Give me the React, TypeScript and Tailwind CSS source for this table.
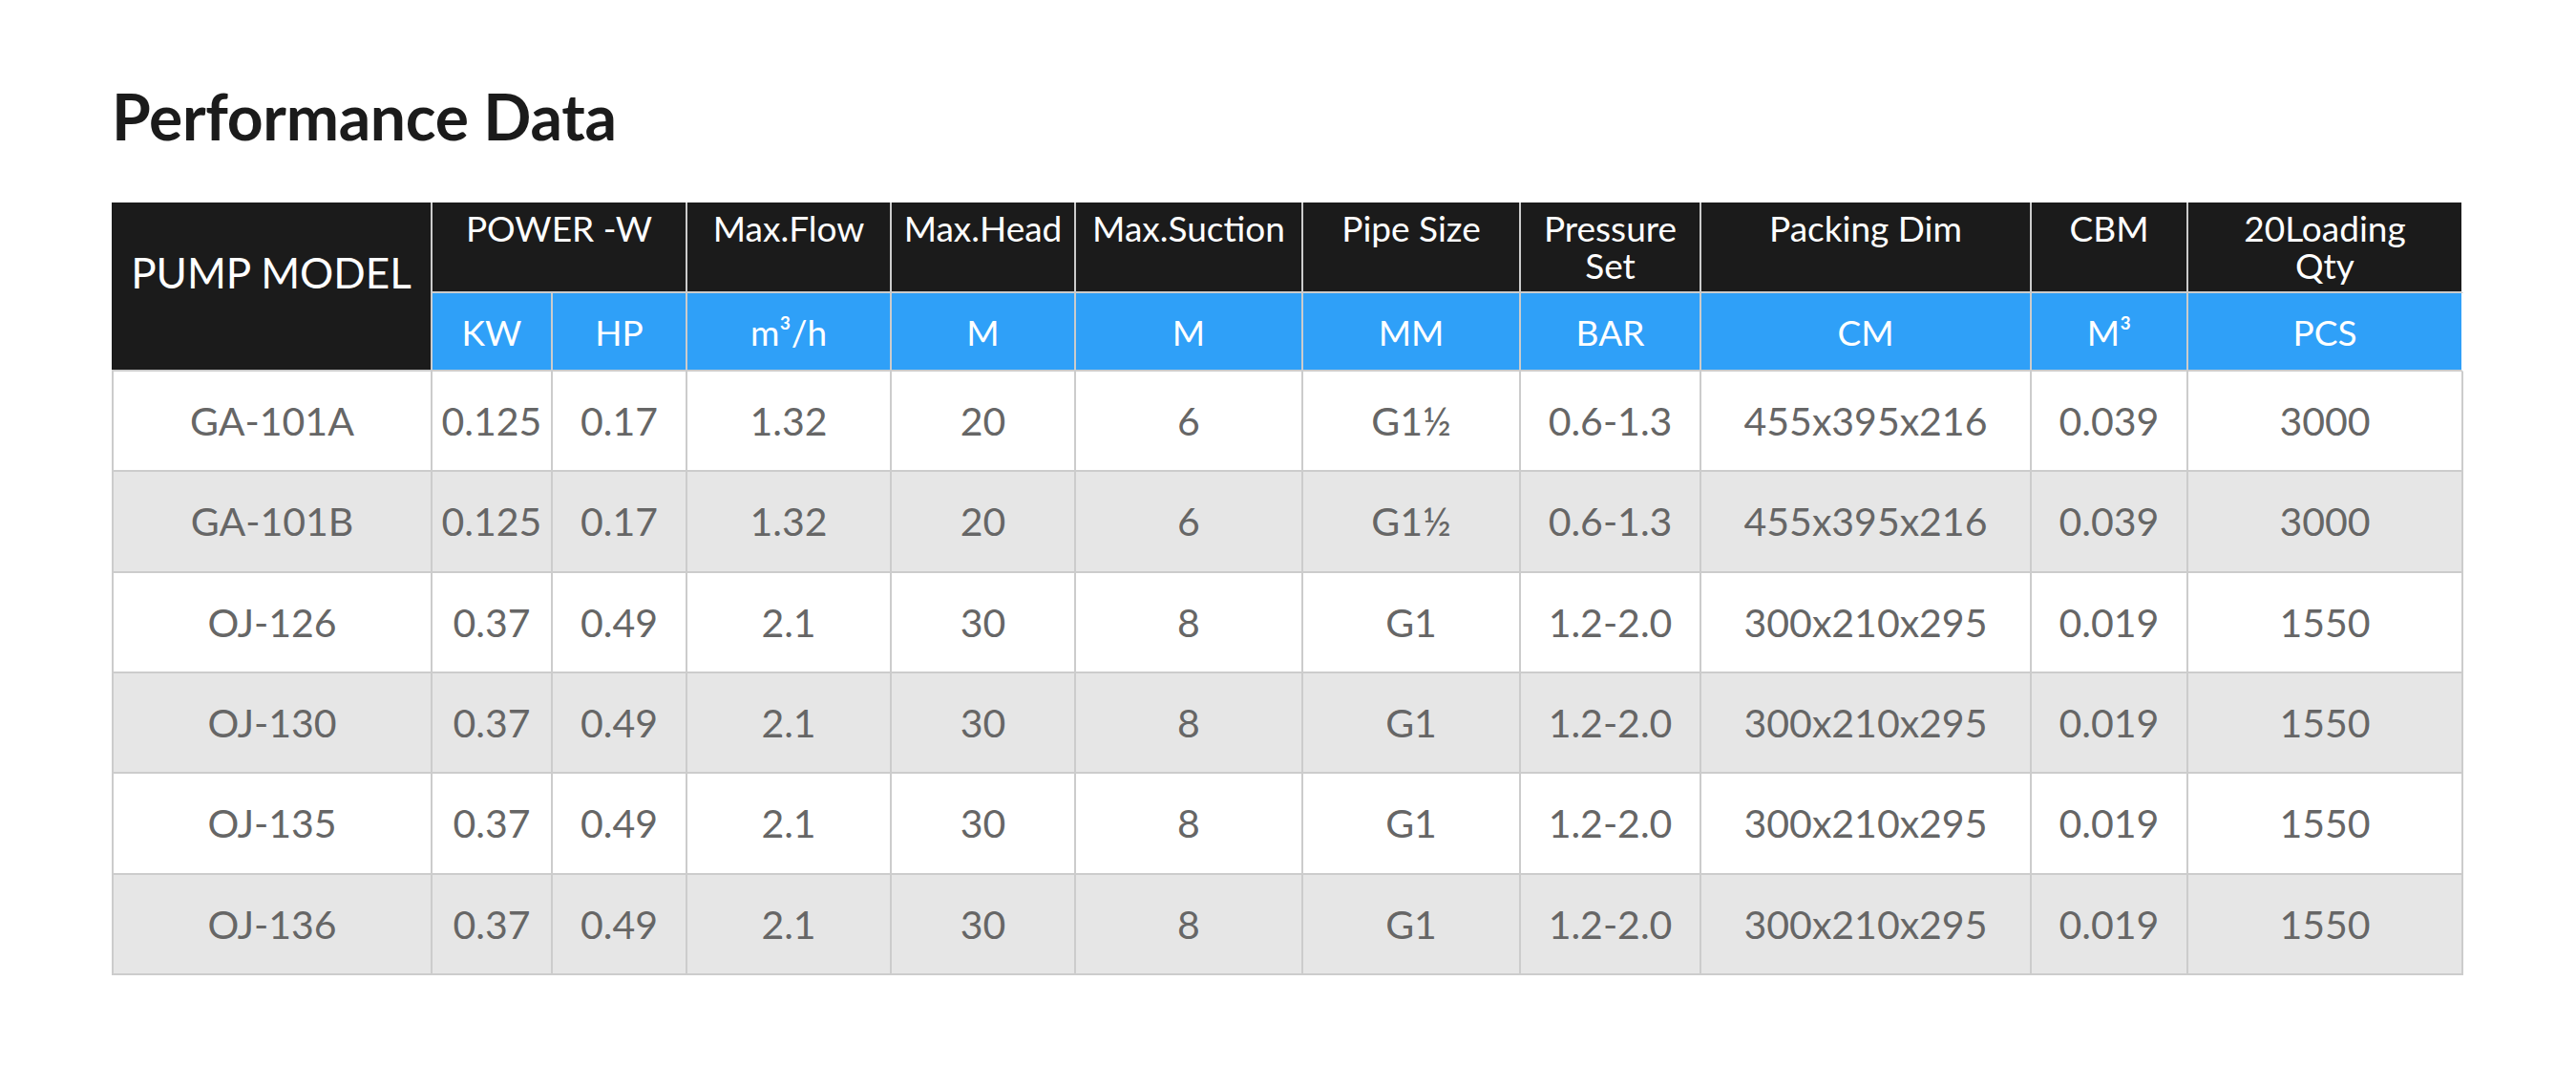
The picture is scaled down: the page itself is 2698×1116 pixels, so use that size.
import React from "react";

const rows = [
  ["GA-101A", "0.125", "0.17", "1.32", "20", "6", "G1½", "0.6-1.3", "455x395x216", "0.039", "3000"],
  ["GA-101B", "0.125", "0.17", "1.32", "20", "6", "G1½", "0.6-1.3", "455x395x216", "0.039", "3000"],
  ["OJ-126", "0.37", "0.49", "2.1", "30", "8", "G1", "1.2-2.0", "300x210x295", "0.019", "1550"],
  ["OJ-130", "0.37", "0.49", "2.1", "30", "8", "G1", "1.2-2.0", "300x210x295", "0.019", "1550"],
  ["OJ-135", "0.37", "0.49", "2.1", "30", "8", "G1", "1.2-2.0", "300x210x295", "0.019", "1550"],
  ["OJ-136", "0.37", "0.49", "2.1", "30", "8", "G1", "1.2-2.0", "300x210x295", "0.019", "1550"],
];

const units = ["KW", "HP", "m³/h", "M", "M", "MM", "BAR", "CM", "M³", "PCS"];

const headCell =
  "bg-[#1b1b1b] border-b-2 border-[#cccccc] text-white text-center text-[37px] leading-[39px] pt-[7px]";

export default function App() {
  return (
    <div className="w-[2698px] h-[1116px] bg-white pl-[117px] pt-[89px] font-['Lato',sans-serif]">
      <h1 className="text-[66px] leading-[66px] font-bold text-[#1b1b1b] tracking-[-0.3px]">Performance Data</h1>
      <div className="mt-[57px] grid w-[2463px] grid-cols-[336px_126px_141px_214px_193px_238px_228px_189px_346px_164px_288px] grid-rows-[95px_82px_repeat(6,105.33px)]">
        <div className="row-span-2 bg-[#1b1b1b] border-r-2 border-b-2 border-[#cccccc] flex items-center justify-center pb-[29px] text-white text-[44px] leading-[44px]">
          PUMP MODEL
        </div>
        <div className={`col-span-2 border-r-2 ${headCell}`}>POWER -W</div>
        <div className={`border-r-2 ${headCell}`}>Max.Flow</div>
        <div className={`border-r-2 ${headCell}`}>Max.Head</div>
        <div className={`border-r-2 ${headCell}`}>Max.Suction</div>
        <div className={`border-r-2 ${headCell}`}>Pipe Size</div>
        <div className={`border-r-2 ${headCell}`}>
          Pressure
          <br />
          Set
        </div>
        <div className={`border-r-2 ${headCell}`}>Packing Dim</div>
        <div className={`border-r-2 ${headCell}`}>CBM</div>
        <div className={`border-r-2 border-r-white ${headCell}`}>
          20Loading
          <br />
          Qty
        </div>

        {units.map((u, i) => (
          <div
            key={u + i}
            className={`bg-[#2fa0f8] border-r-2 border-b-2 border-[#cccccc] flex items-center justify-center text-white text-[37px] leading-[37px] ${
              i === units.length - 1 ? "border-r-white" : ""
            }`}
          >
            {u}
          </div>
        ))}

        {rows.map((r, ri) =>
          r.map((c, ci) => (
            <div
              key={`${ri}-${ci}`}
              className={`${ri % 2 === 1 ? "bg-[#e6e6e6]" : "bg-white"} border-r-2 border-b-2 border-[#cccccc] ${
                ci === 0 ? "border-l-2" : ""
              } flex items-center justify-center text-[#666666] text-[41px] leading-[41px]`}
            >
              {c}
            </div>
          ))
        )}
      </div>
    </div>
  );
}
